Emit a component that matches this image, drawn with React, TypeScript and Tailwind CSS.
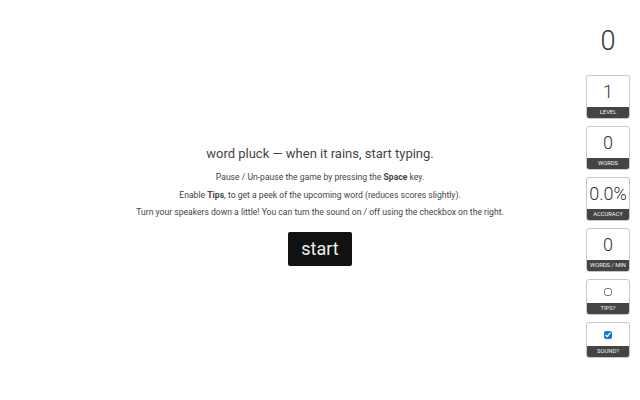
import React, { useState } from "react";

const font = { fontFamily: 'Roboto, "Liberation Sans", sans-serif' };

function StatBox({ value, label }: { value: string; label: string }) {
  return (
    <div className="w-[44px] h-[44px] flex flex-col border border-[#c8c8c8] rounded-[3px] overflow-hidden bg-white">
      <div className="flex-1 flex items-center justify-center text-[18px] leading-none text-[#333] font-light">
        {value}
      </div>
      <div className="h-[11px] bg-[#444] text-[#f2f2f2] text-[5.8px] leading-[11px] text-center uppercase">
        {label}
      </div>
    </div>
  );
}

function CheckBox({ label, checked, onChange }: { label: string; checked: boolean; onChange: () => void }) {
  return (
    <div className="w-[44px] h-[36px] flex flex-col border border-[#c8c8c8] rounded-[3px] overflow-hidden bg-white">
      <div className="flex-1 flex items-center justify-center">
        <input
          type="checkbox"
          checked={checked}
          onChange={onChange}
          className="w-[8px] h-[8px] m-0 accent-[#1a73e8]"
        />
      </div>
      <div className="h-[11px] bg-[#444] text-[#f2f2f2] text-[5.8px] leading-[11px] text-center uppercase">
        {label}
      </div>
    </div>
  );
}

export default function App() {
  const [tips, setTips] = useState(false);
  const [sound, setSound] = useState(true);

  return (
    <div className="relative w-[640px] h-[400px] bg-white text-[#444] overflow-hidden" style={font}>
      {/* intro / start screen */}
      <div className="h-full flex flex-col items-center pt-[145px]">
        <h1 className="text-[13px] leading-[18px] text-[#444] mb-[6px]">
          word pluck — when it rains, start typing.
        </h1>
        <div className="text-[8.6px] leading-[17.5px] text-[#444] text-center">
          <p>
            Pause / Un-pause the game by pressing the <b>Space</b> key.
          </p>
          <p>
            Enable <b>Tips</b>, to get a peek of the upcoming word (reduces scores slightly).
          </p>
          <p>Turn your speakers down a little! You can turn the sound on / off using the checkbox on the right.</p>
        </div>
        <button className="mt-[10px] w-[64px] h-[34px] bg-[#111] text-[#eee] text-[18px] leading-none rounded-[2px]">
          start
        </button>
      </div>

      {/* HUD */}
      <div className="absolute top-[28px] right-[10px] flex flex-col items-center gap-[7px]">
        <div className="text-[27px] leading-none text-[#333] font-light mb-[13px]">0</div>
        <StatBox value="1" label="Level" />
        <StatBox value="0" label="Words" />
        <StatBox value="0.0%" label="Accuracy" />
        <StatBox value="0" label="Words / Min" />
        <CheckBox label="Tips?" checked={tips} onChange={() => setTips(!tips)} />
        <CheckBox label="Sound?" checked={sound} onChange={() => setSound(!sound)} />
      </div>
    </div>
  );
}
